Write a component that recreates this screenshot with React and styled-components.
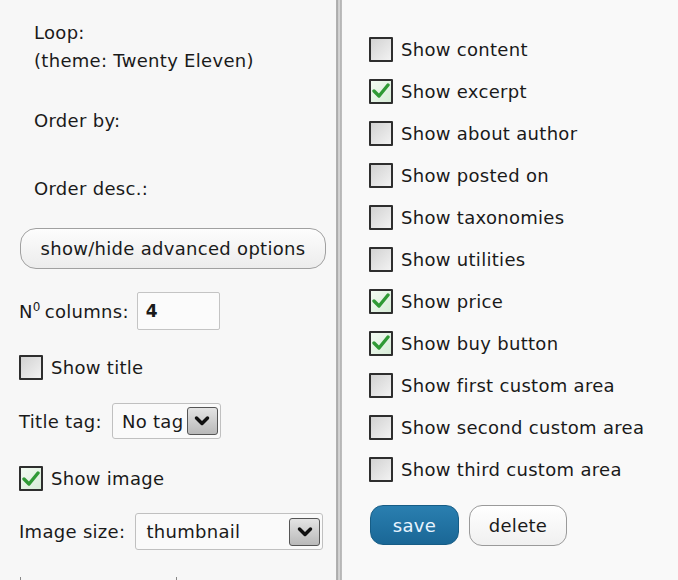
import React from "react";
import styled, { createGlobalStyle } from "styled-components";

const GlobalStyle = createGlobalStyle`
  html, body {
    margin: 0;
    padding: 0;
    background: #f7f7f7;
  }
  body {
    font-family: "DejaVu Sans", Verdana, sans-serif;
    font-size: 18px;
    letter-spacing: 0.3px;
    color: #1a1a1a;
  }
`;

const Page = styled.div`
  width: 678px;
  height: 580px;
  overflow: hidden;
  display: flex;
  background: #f7f7f7;
`;

const LeftPanel = styled.div`
  width: 336px;
  flex: none;
  display: flex;
  flex-direction: column;
  padding: 19px 0 0 19px;
  box-sizing: border-box;

  & > * {
    flex-shrink: 0;
  }
`;

const Divider = styled.div`
  width: 6px;
  flex: none;
  background: linear-gradient(to right, #c4c4c4 0, #9c9c9c 1px, #bdbdbd 2px, #e2e2e2 3px, #a9a9a9 5px, #d0d0d0 6px);
`;

const RightPanel = styled.div`
  flex: 1;
  display: flex;
  flex-direction: column;
  padding: 28px 0 0 27px;
  background: #f9f9f9;

  & > * {
    flex-shrink: 0;
  }
`;

const Label = styled.div`
  line-height: 28px;
  padding-left: ${(p) => p.$indent || 0}px;
  margin-top: ${(p) => p.$mt || 0}px;
  white-space: nowrap;
`;

const Row = styled.div`
  display: flex;
  align-items: center;
  gap: ${(p) => p.$gap || 8}px;
  margin-top: ${(p) => p.$mt || 0}px;
  white-space: nowrap;
`;

const PillButton = styled.button`
  width: 306px;
  height: 41px;
  margin-top: ${(p) => p.$mt || 0}px;
  border: 1px solid #a0a0a0;
  border-radius: 16px;
  background: linear-gradient(#fdfdfd, #ececec);
  font-family: inherit;
  font-size: 18px;
  letter-spacing: 0.3px;
  color: #1a1a1a;
  padding: 0;
  margin-left: 1px;
`;

const TextInput = styled.div`
  width: 83px;
  height: 38px;
  box-sizing: border-box;
  border: 1px solid #c4c4c4;
  border-radius: 2px;
  background: #fbfbfb;
  padding-left: 8px;
  display: flex;
  align-items: center;
  font-weight: bold;
  font-size: 17px;
`;

const Select = styled.div`
  width: ${(p) => p.$w}px;
  height: ${(p) => p.$h}px;
  box-sizing: border-box;
  border: 1px solid #c0c0c0;
  border-radius: 3px;
  background: #fafafa;
  display: flex;
  align-items: center;
  padding: 0 2px 0 ${(p) => p.$pl || 9}px;
`;

const SelectText = styled.span`
  flex: 1;
  overflow: hidden;
  white-space: nowrap;
`;

const ArrowBox = styled.span`
  width: 31px;
  height: 28px;
  flex: none;
  box-sizing: border-box;
  border: 1.5px solid #555;
  border-radius: 3px;
  background: linear-gradient(#e4e4e4, #b9b9b9);
  display: flex;
  align-items: center;
  justify-content: center;
`;

const Box = styled.span`
  width: 24px;
  height: 25px;
  flex: none;
  box-sizing: border-box;
  border: 2px solid #2e2e2e;
  border-radius: 1px;
  background: ${(p) => (p.$checked ? "linear-gradient(135deg, #f2fbf2, #d8ecd8)" : "linear-gradient(135deg, #d2d2d2, #f2f2f2)")};
  display: flex;
  align-items: center;
  justify-content: center;
`;

const CheckRow = styled(Row)`
  height: 42px;
  gap: 8px;
`;

const Actions = styled.div`
  display: flex;
  gap: 10px;
  margin-top: 15px;
  margin-left: 1px;
`;

const SaveButton = styled.button`
  width: 89px;
  height: 40px;
  border: 1px solid #175d86;
  border-radius: 13px;
  background: linear-gradient(#2a7fb0, #1a6796);
  color: #e8f4ff;
  font-family: inherit;
  font-size: 18px;
  letter-spacing: 0.3px;
  padding: 0;
`;

const DeleteButton = styled.button`
  width: 98px;
  height: 41px;
  border: 1.5px solid #9a9a9a;
  border-radius: 13px;
  background: linear-gradient(#ffffff, #f0f0f0);
  color: #1a1a1a;
  font-family: inherit;
  font-size: 18px;
  letter-spacing: 0.3px;
  padding: 0;
`;

const Tail = styled.div`
  margin-top: 27px;
  margin-left: 1px;
  width: 155px;
  height: 10px;
  border-left: 1px solid #888;
  border-right: 1px solid #888;
`;

const Sup = styled.sup`
  font-size: 12px;
  vertical-align: 7px;
  margin-right: 4px;
`;

const Check = () => (
  <svg width="18" height="16" viewBox="0 0 18 16">
    <path d="M2 8 L7 13 L16 2" fill="none" stroke="#2f9a35" strokeWidth="3.4" strokeLinecap="round" strokeLinejoin="round" />
  </svg>
);

const Chevron = () => (
  <svg width="16" height="12" viewBox="0 0 16 12">
    <path d="M2.5 3 L8 8.5 L13.5 3" fill="none" stroke="#111" strokeWidth="3.5" strokeLinecap="round" strokeLinejoin="round" />
  </svg>
);

const Checkbox = ({ checked }) => <Box $checked={checked}>{checked && <Check />}</Box>;

const options = [
  ["Show content", false],
  ["Show excerpt", true],
  ["Show about author", false],
  ["Show posted on", false],
  ["Show taxonomies", false],
  ["Show utilities", false],
  ["Show price", true],
  ["Show buy button", true],
  ["Show first custom area", false],
  ["Show second custom area", false],
  ["Show third custom area", false],
];

export default function App() {
  return (
    <>
      <GlobalStyle />
      <Page>
        <LeftPanel>
          <Label $indent={15}>Loop:</Label>
          <Label $indent={15}>(theme: Twenty Eleven)</Label>
          <Label $indent={15} $mt={32}>Order by:</Label>
          <Label $indent={15} $mt={40}>Order desc.:</Label>
          <PillButton $mt={25}>show/hide advanced options</PillButton>
          <Row $mt={23} $gap={8}>
            <span>N<Sup>0</Sup>columns:</span>
            <TextInput>4</TextInput>
          </Row>
          <Row $mt={25} $gap={8}>
            <Checkbox />
            <span>Show title</span>
          </Row>
          <Row $mt={23} $gap={10}>
            <span>Title tag:</span>
            <Select $w={109} $h={36} $pl={9}>
              <SelectText>No tag</SelectText>
              <ArrowBox><Chevron /></ArrowBox>
            </Select>
          </Row>
          <Row $mt={27} $gap={8}>
            <Checkbox checked />
            <span>Show image</span>
          </Row>
          <Row $mt={22} $gap={10}>
            <span>Image size:</span>
            <Select $w={188} $h={37} $pl={10}>
              <SelectText>thumbnail</SelectText>
              <ArrowBox><Chevron /></ArrowBox>
            </Select>
          </Row>
          <Tail />
        </LeftPanel>
        <Divider />
        <RightPanel>
          {options.map(([label, checked]) => (
            <CheckRow key={label}>
              <Checkbox checked={checked} />
              <span>{label}</span>
            </CheckRow>
          ))}
          <Actions>
            <SaveButton>save</SaveButton>
            <DeleteButton>delete</DeleteButton>
          </Actions>
        </RightPanel>
      </Page>
    </>
  );
}
